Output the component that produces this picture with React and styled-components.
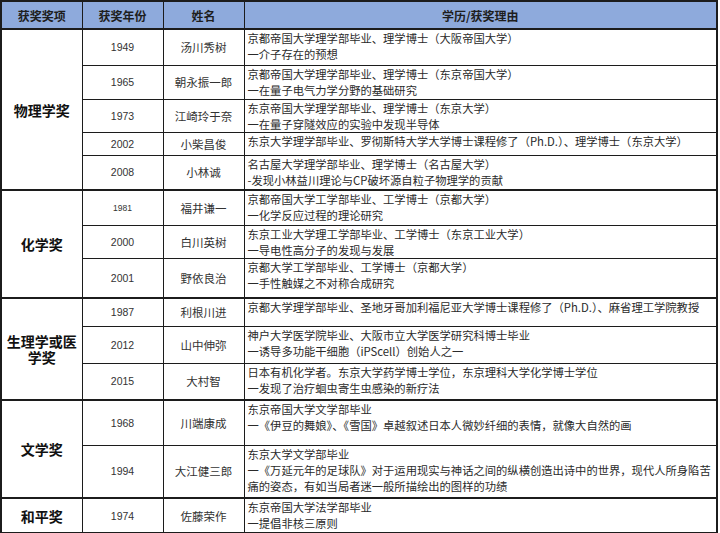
import React from 'react'
import styled, {createGlobalStyle} from 'styled-components'

const GlobalStyle = createGlobalStyle`
  html, body {
    margin: 0;
    padding: 0;
    background: #ffffff;
  }
  body {
    font-family: "Noto Sans CJK SC", "Noto Sans", sans-serif;
    color: #222;
  }
`

const sections = [
  {
    name: '物理学奖',
    rows: [
      {year: '1949', person: '汤川秀树', h: 36, lines: ['京都帝国大学理学部毕业、理学博士（大阪帝国大学）', '一介子存在的预想']},
      {year: '1965', person: '朝永振一郎', h: 34, lines: ['京都帝国大学理学部毕业、理学博士（东京帝国大学）', '一在量子电气力学分野的基础研究']},
      {year: '1973', person: '江崎玲于奈', h: 33, lines: ['东京帝国大学理学部毕业、理学博士（东京大学）', '一在量子穿隧效应的实验中发现半导体']},
      {year: '2002', person: '小柴昌俊', h: 23, lines: ['东京大学理学部毕业、罗彻斯特大学大学博士课程修了（Ph.D.）、理学博士（东京大学）']},
      {year: '2008', person: '小林诚', h: 35, lines: ['名古屋大学理学部毕业、理学博士（名古屋大学）', '-发现小林益川理论与CP破坏源自粒子物理学的贡献']}
    ]
  },
  {
    name: '化学奖',
    rows: [
      {year: '1981', person: '福井谦一', h: 35, small: true, lines: ['京都帝国大学工学部毕业、工学博士（京都大学）', '一化学反应过程的理论研究']},
      {year: '2000', person: '白川英树', h: 33, lines: ['东京工业大学理工学部毕业、工学博士（东京工业大学）', '一导电性高分子的发现与发展']},
      {year: '2001', person: '野依良治', h: 40, lines: ['京都大学工学部毕业、工学博士（京都大学）', '一手性触媒之不对称合成研究']}
    ]
  },
  {
    name: '生理学或医学奖',
    rows: [
      {year: '1987', person: '利根川进', h: 28, lines: ['京都大学理学部毕业、圣地牙哥加利福尼亚大学博士课程修了（Ph.D.）、麻省理工学院教授']},
      {year: '2012', person: '山中伸弥', h: 37, lines: ['神户大学医学院毕业、大阪市立大学医学研究科博士毕业', '一诱导多功能干细胞（iPScell）创始人之一']},
      {year: '2015', person: '大村智', h: 37, lines: ['日本有机化学者。东京大学药学博士学位，东京理科大学化学博士学位', '一发现了治疗蛔虫寄生虫感染的新疗法']}
    ]
  },
  {
    name: '文学奖',
    rows: [
      {year: '1968', person: '川端康成', h: 45, lines: ['东京帝国大学文学部毕业', '一《伊豆的舞娘》、《雪国》卓越叙述日本人微妙纤细的表情，就像大自然的画']},
      {year: '1994', person: '大江健三郎', h: 53, lines: ['东京大学文学部毕业', '一《万延元年的足球队》对于运用现实与神话之间的纵横创造出诗中的世界，现代人所身陷苦', '痛的姿态，有如当局者迷一般所描绘出的图样的功绩']}
    ]
  },
  {
    name: '和平奖',
    rows: [
      {year: '1974', person: '佐藤荣作', h: 35, lines: ['东京帝国大学法学部毕业', '一提倡非核三原则']}
    ]
  }
]

const App = () => (
  <>
    <GlobalStyle />
    <Table>
      <colgroup>
        <col style={{width: 81}} />
        <col style={{width: 81}} />
        <col style={{width: 81}} />
        <col />
      </colgroup>
      <thead>
        <tr>
          <HeadCell>获奖奖项</HeadCell>
          <HeadCell>获奖年份</HeadCell>
          <HeadCell>姓名</HeadCell>
          <HeadCell>学历/获奖理由</HeadCell>
        </tr>
      </thead>
      <tbody>
        {sections.map(section =>
          section.rows.map((row, i) => (
            <Row key={row.year} $h={row.h} $first={i === 0}>
              {i === 0 && (
                <CategoryCell rowSpan={section.rows.length}>{section.name}</CategoryCell>
              )}
              <YearCell $small={row.small}>{row.year}</YearCell>
              <NameCell>{row.person}</NameCell>
              <ReasonCell>
                {row.lines.map(line => (
                  <Line key={line}>{line}</Line>
                ))}
              </ReasonCell>
            </Row>
          ))
        )}
      </tbody>
    </Table>
  </>
)

export default App

const Table = styled.table`
  width: 718px;
  table-layout: fixed;
  border-collapse: collapse;
  border: 2px solid #1c1c1c;
`

const HeadCell = styled.th`
  height: 26px;
  padding: 0;
  background: #8eaadc;
  border: 1px solid #1c1c1c;
  border-bottom: 2px solid #1c1c1c;
  font-size: 12px;
  font-weight: 700;
  color: #1e1e1e;
  text-align: center;
  vertical-align: middle;
`

const Row = styled.tr`
  height: ${p => p.$h}px;

  td {
    border-top: ${p => (p.$first ? '2px' : '1px')} solid #1c1c1c;
  }
`

const Cell = styled.td`
  padding: 0;
  border-left: 1px solid #1c1c1c;
  border-right: 1px solid #1c1c1c;
  border-bottom: 1px solid #1c1c1c;
`

const CategoryCell = styled(Cell)`
  font-size: 14px;
  font-weight: 700;
  line-height: 16px;
  text-align: center;
  vertical-align: middle;
  color: #111;
  padding: 0 4px;
`

const YearCell = styled(Cell)`
  font-family: "Liberation Sans", Arial, sans-serif;
  font-size: ${p => (p.$small ? '8.5px' : '10.5px')};
  color: #333;
  text-align: center;
  vertical-align: middle;
`

const NameCell = styled(Cell)`
  font-size: 11.5px;
  color: #333;
  text-align: center;
  vertical-align: middle;
`

const ReasonCell = styled(Cell)`
  font-size: 11.3px;
  line-height: 16px;
  color: #2a2a2a;
  vertical-align: top;
  padding: 0 2px 0 3px;
`

const Line = styled.div`
  white-space: nowrap;
`
